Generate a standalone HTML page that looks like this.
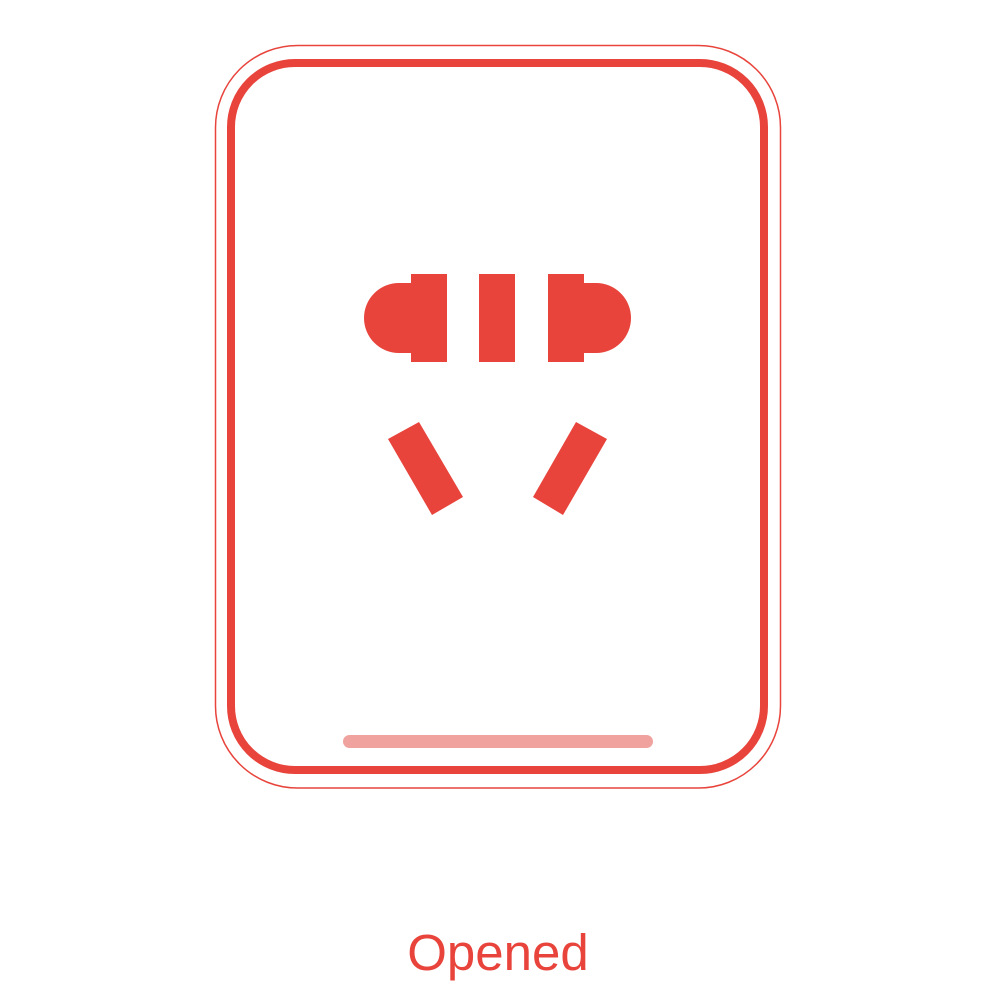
<!DOCTYPE html>
<html><head><meta charset="utf-8"><style>
html,body{margin:0;padding:0;background:#fff;width:996px;height:996px;overflow:hidden}
svg{display:block}
</style></head><body>
<svg width="996" height="996" viewBox="0 0 996 996" xmlns="http://www.w3.org/2000/svg">
<rect x="215.5" y="45.5" width="565" height="742.5" rx="82" fill="none" stroke="#e8443c" stroke-width="1.5"/>
<rect x="231" y="63" width="533" height="707" rx="64" fill="none" stroke="#e8443c" stroke-width="8"/>
<g fill="#e8443c">
<path d="M411 274H447V362H411V353H399A35 35 0 0 1 399 283H411Z"/>
<rect x="479" y="274" width="36" height="88"/>
<path d="M584 274H548V362H584V353H596A35 35 0 0 0 596 283H584Z"/>
<polygon points="388,439 419,422 463,497 432,515"/>
<polygon points="533,497 576,422 607,439 563,515"/>
</g>
<rect x="343" y="735" width="310" height="13" rx="6.5" fill="#f0a29e"/>
<text x="498" y="970" text-anchor="middle" font-family="Liberation Sans, sans-serif" font-size="51" fill="#e8443c">Opened</text>
</svg>
</body></html>
